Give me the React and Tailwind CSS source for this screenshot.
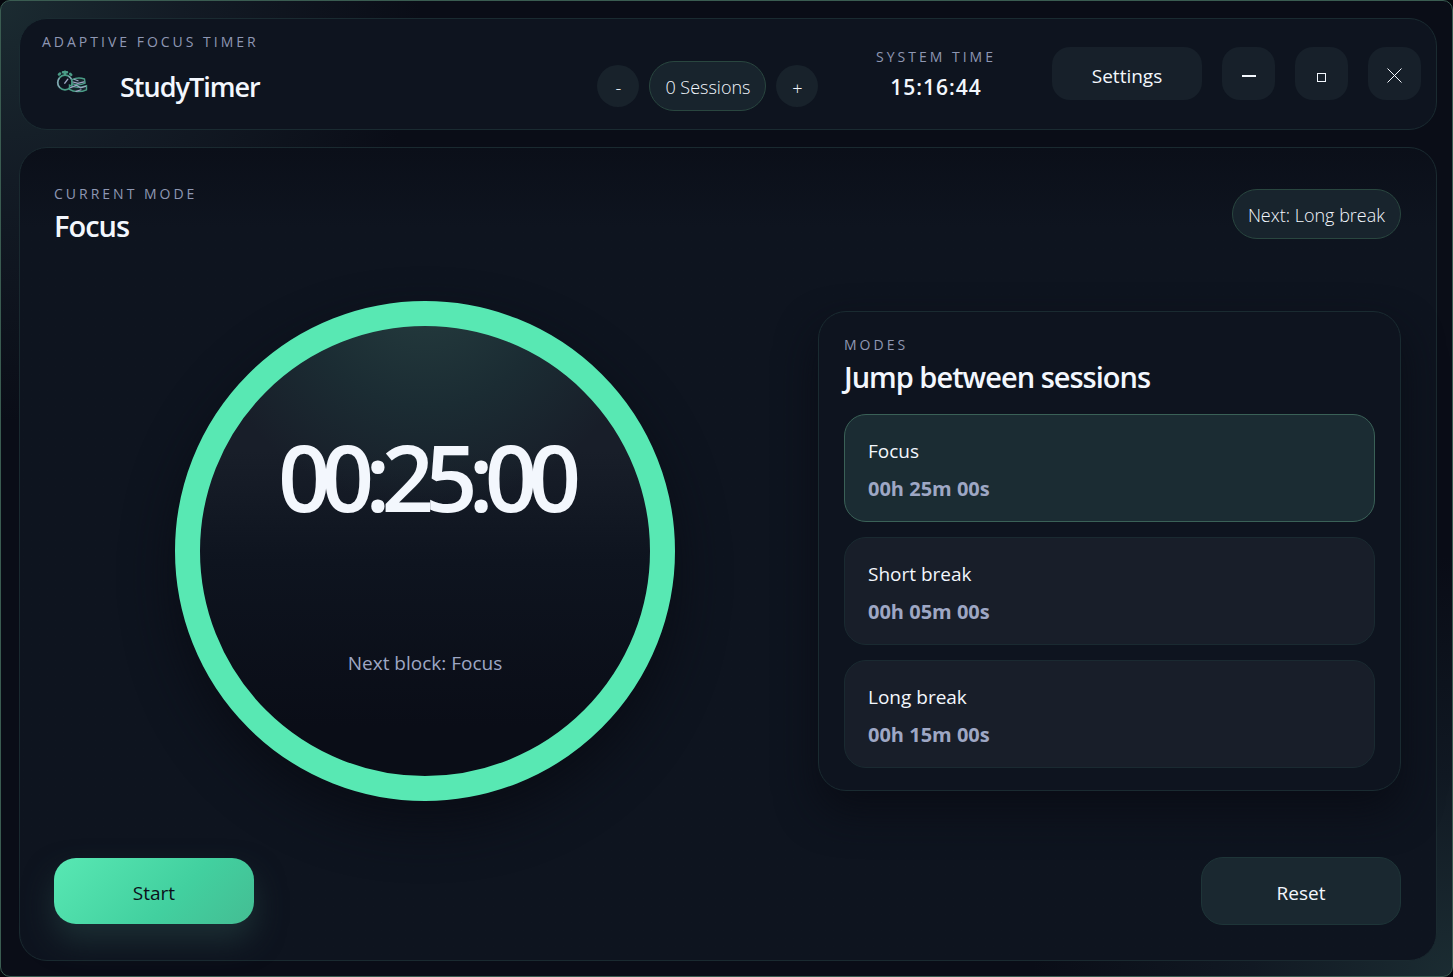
import { useState } from 'react';
import clsx from 'clsx';

const MODES = [
  { id: 'focus', label: 'Focus', time: '00h 25m 00s', clock: '00:25:00' },
  { id: 'short', label: 'Short break', time: '00h 05m 00s', clock: '00:05:00' },
  { id: 'long', label: 'Long break', time: '00h 15m 00s', clock: '00:15:00' },
];

function Eyebrow({ children }) {
  return <p className="text-[14px] leading-5 tracking-[3px] text-[#8e97b3] uppercase">{children}</p>;
}

function Pill({ children }) {
  return (
    <span className="flex h-[50px] items-center rounded-full border border-[#29463f] bg-[#18242d] px-[15px] pt-0.5 text-[18px] font-light whitespace-nowrap text-[#f3f7fd]">
      {children}
    </span>
  );
}

function RoundButton({ children, label, onClick }) {
  return (
    <button
      type="button"
      aria-label={label}
      onClick={onClick}
      className="grid size-[42px] place-items-center rounded-full bg-[#18222b] pt-1 text-[18px] font-light"
    >
      {children}
    </button>
  );
}

function WindowButton({ label, children }) {
  return (
    <button type="button" aria-label={label} className="grid size-[53px] place-items-center rounded-[18px] bg-[#17202a]">
      <svg viewBox="0 0 20 20" className="size-5" fill="none" stroke="currentColor" shapeRendering="crispEdges">
        {children}
      </svg>
    </button>
  );
}

// stopwatch standing next to a small pile of books
function Logo() {
  return (
    <svg viewBox="0 0 32 24" className="h-6 w-8" fill="none" strokeLinecap="round" aria-hidden="true">
      <circle cx="9" cy="12.5" r="7.3" stroke="#4a9c86" strokeWidth="1.8" />
      <path d="M3.2 8.4A7.3 7.3 0 0 0 3.6 17.4M13 6.6a7.3 7.3 0 0 1 2.2 2.2" stroke="#8fa0b8" strokeWidth="1.2" />
      <path d="M7 2.2h4M9 1.8v2.6M3 4.4l1-.8M14.2 3.8l1 1" stroke="#4a9c86" strokeWidth="2.6" />
      <path d="M8.8 13.2l3-4" stroke="#9ea7c4" strokeWidth="1.4" />
      <path
        d="M13.5 15.2c4 2.2 11 2.4 17 .4v4.2c-5 2.6-13 2.4-17-.4zM16 9.6c4-1.8 9-1.8 12.5-.6l.6 4.2c-4 2-9 2-13 .4z"
        fill="#17242b"
        stroke="#4a9c86"
        strokeWidth="1.4"
      />
      <path d="M17 12l5 1.4 6-1.6M14.5 17.6l6-2.4 4 2.6 5-1.4M20 21.4l5-1.6M18 9.2l4 1.6" stroke="#9ea7c4" strokeWidth="1.2" />
    </svg>
  );
}

function ModeCard({ mode, active, onSelect }) {
  return (
    <button
      type="button"
      aria-pressed={active}
      onClick={onSelect}
      className={clsx(
        'flex h-[108px] flex-col gap-2 rounded-[22px] border px-[23px] pt-[21px] text-left',
        active ? 'border-[#3a6157] bg-[#1b2c33]' : 'border-[#1a2a31] bg-[#181e29]'
      )}
    >
      <span className="text-[19px] leading-[30px] text-[#f3f7fd]">{mode.label}</span>
      <span className="text-[20px] leading-[30px] font-bold text-[#9ea7c4]">{mode.time}</span>
    </button>
  );
}

export default function App() {
  const [modeId, setModeId] = useState('focus');
  const [sessions, setSessions] = useState(0);
  const mode = MODES.find((m) => m.id === modeId);

  return (
    <div className="bg-[#05070d]">
      <div className="flex min-h-screen flex-col gap-[17px] rounded-[10px] border border-[#3a5c51] bg-[#0a0d17] bg-[radial-gradient(circle_at_top_left,#1b2b31_0,#131b25_180px,transparent_420px),radial-gradient(circle_at_bottom_right,#1b2c32_0,#111923_200px,transparent_420px)] pt-[17px] pr-[15px] pb-[15px] pl-[18px] font-['Open_Sans','Noto_Sans',sans-serif] text-[#f3f7fd]">
        <header className="grid h-[112px] grid-cols-[14fr_auto_15fr] rounded-[28px] border border-[#1a2b31] bg-[#0e141f] px-[15px]">
          <div className="pt-[13px] pl-[7px]">
            <Eyebrow>Adaptive Focus Timer</Eyebrow>
            <div className="flex items-start gap-8 pt-2.5 pl-3.5">
              <div className="pt-2">
                <Logo />
              </div>
              <h1 className="pt-[5px] text-[27px] leading-10 font-semibold tracking-[-1px]">StudyTimer</h1>
            </div>
          </div>

          <div className="flex items-center gap-2.5 pt-6">
            <RoundButton label="Remove session" onClick={() => setSessions((n) => Math.max(0, n - 1))}>-</RoundButton>
            <Pill>{sessions} Sessions</Pill>
            <RoundButton label="Add session" onClick={() => setSessions((n) => n + 1)}>+</RoundButton>
          </div>

          <div className="flex items-start justify-end gap-5 pt-7">
            <div className="mr-9 text-center">
              <Eyebrow>System time</Eyebrow>
              <time className="block text-[21px] leading-10 font-semibold tracking-[1px]">15:16:44</time>
            </div>
            <button type="button" className="h-[53px] w-[150px] rounded-[18px] bg-[#17202a] pt-1.5 text-[19px]">
              Settings
            </button>
            <WindowButton label="Minimize"><path d="M3 12h14" strokeWidth="2" /></WindowButton>
            <WindowButton label="Maximize"><path d="M5.5 9.5h8v8h-8z" /></WindowButton>
            <WindowButton label="Close">
              <path d="M2.5 4.5l14 14M16.5 4.5l-14 14" shapeRendering="auto" />
            </WindowButton>
          </div>
        </header>

        <main className="flex flex-1 flex-col rounded-[28px] border border-[#1a2a30] bg-[#0e141f] bg-linear-to-b from-[#0b0f19] to-[#0e141f] to-[80px] pt-9 pr-[35px] pb-[35px] pl-[34px]">
          <div className="flex h-[60px] items-start justify-between">
            <div>
              <Eyebrow>Current mode</Eyebrow>
              <h2 className="text-[29px] leading-[44px] font-semibold tracking-[-1px]">{mode.label}</h2>
            </div>
            <div className="pt-[5px]">
              <Pill>Next: Long break</Pill>
            </div>
          </div>

          <div className="grid flex-1 grid-cols-[14fr_11fr] items-center gap-[22px]">
            <div className="flex size-[500px] flex-col items-center justify-self-center rounded-full border-[25px] border-[#58e8b3] bg-[radial-gradient(circle_at_50%_-5%,#263e40_0,#1b2c33_130px,transparent_230px),linear-gradient(#181e29_30%,#0e141f_52%,#0a0d17_85%)] bg-origin-border shadow-[0_24px_50px_#0a0d16]">
              <div className="mt-[87px] text-[92px] leading-[128px] font-semibold tracking-[-9px]" role="timer">
                {mode.clock}
              </div>
              <p className="mt-[107px] text-[19px] leading-[30px] text-[#9ea7c4]">Next block: Focus</p>
            </div>

            <section className="rounded-[28px] border border-[#1a2b31] bg-[#0e141f] px-[25px] pt-[23px] pb-[22px] shadow-[0_20px_40px_#0a0d16]">
              <Eyebrow>Modes</Eyebrow>
              <h3 className="pb-[15px] text-[29px] leading-[44px] font-semibold tracking-[-1px]">Jump between sessions</h3>
              <div className="flex flex-col gap-[15px]">
                {MODES.map((m) => (
                  <ModeCard key={m.id} mode={m} active={m.id === modeId} onSelect={() => setModeId(m.id)} />
                ))}
              </div>
            </section>
          </div>

          <div className="flex items-center justify-between">
            <button
              type="button"
              className="h-[66px] w-[200px] rounded-[22px] bg-linear-135 from-[#58e8b3] via-[#42d09f] via-60% to-[#44bd93] pt-1 text-[19px] font-medium text-[#0b101a] shadow-[0_16px_30px_#1c2f34]"
            >
              Start
            </button>
            <button type="button" className="h-[68px] w-[200px] rounded-[22px] border border-[#1e3538] bg-[#1a2830] pt-1 text-[19px] font-medium">
              Reset
            </button>
          </div>
        </main>
      </div>
    </div>
  );
}
